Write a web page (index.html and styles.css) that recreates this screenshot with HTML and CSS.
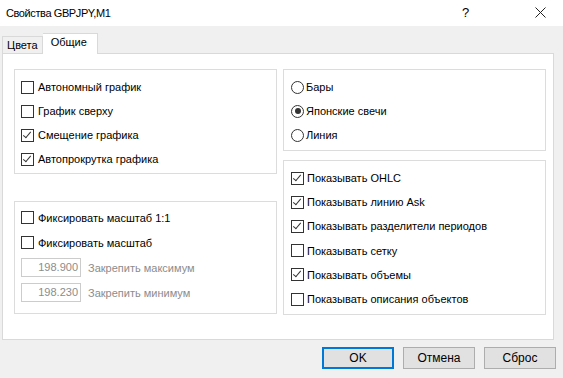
FILE: index.html
```html
<!DOCTYPE html>
<html lang="ru">
<head>
<meta charset="utf-8">
<link rel="stylesheet" href="styles.css">
</head>
<body>
<div class="dialog">
  <div class="titlebar">
    <span class="title">Свойства GBPJPY,M1</span>
    <span class="help">?</span>
    <span class="close"><svg width="11" height="11" viewBox="0 0 11 11"><path d="M0.5 0.5L10.5 10.5M10.5 0.5L0.5 10.5" stroke="#222" stroke-width="1" fill="none"/></svg></span>
  </div>
  <div class="body">
    <div class="tabs">
      <div class="tab">Цвета</div>
      <div class="tab active">Общие</div>
    </div>
    <div class="panel">
      <div class="col">
        <div class="group g1">
          <div class="row"><span class="cb"></span>Автономный график</div>
          <div class="row"><span class="cb"></span>График сверху</div>
          <div class="row"><span class="cb on"></span>Смещение графика</div>
          <div class="row"><span class="cb on"></span>Автопрокрутка графика</div>
        </div>
        <div class="group g3">
          <div class="row"><span class="cb"></span>Фиксировать масштаб 1:1</div>
          <div class="row"><span class="cb"></span>Фиксировать масштаб</div>
          <div class="row dis"><span class="input">198.900</span>Закрепить максимум</div>
          <div class="row dis"><span class="input">198.230</span>Закрепить минимум</div>
        </div>
      </div>
      <div class="col">
        <div class="group g2">
          <div class="row"><span class="rb"></span>Бары</div>
          <div class="row"><span class="rb on"></span>Японские свечи</div>
          <div class="row"><span class="rb"></span>Линия</div>
        </div>
        <div class="group g4">
          <div class="row"><span class="cb on"></span>Показывать OHLC</div>
          <div class="row"><span class="cb on"></span>Показывать линию Ask</div>
          <div class="row"><span class="cb on"></span>Показывать разделители периодов</div>
          <div class="row"><span class="cb"></span>Показывать сетку</div>
          <div class="row"><span class="cb on"></span>Показывать объемы</div>
          <div class="row"><span class="cb"></span>Показывать описания объектов</div>
        </div>
      </div>
    </div>
    <div class="buttons">
      <div class="btn default">OK</div>
      <div class="btn">Отмена</div>
      <div class="btn">Сброс</div>
    </div>
  </div>
</div>
</body>
</html>
```
FILE: styles.css
```css
html, body {
  margin: 0;
  padding: 0;
  background: #f0f0f0;
}
.dialog {
  width: 563px;
  height: 378px;
  font-family: "Liberation Sans", Arial, sans-serif;
  font-size: 11px;
  color: #000;
  background: #f0f0f0;
}
.titlebar {
  height: 26px;
  background: #fff;
  display: flex;
  align-items: center;
  position: relative;
}
.title {
  margin-left: 6px;
  font-size: 11px;
  letter-spacing: -0.4px;
  margin-top: -1px;
}
.help {
  position: absolute;
  left: 462px;
  top: 5px;
  font-size: 13px;
}
.close {
  position: absolute;
  left: 535px;
  top: 7px;
  display: flex;
}
.body {
  padding: 7px 9px 0 2px;
}
.tabs {
  display: flex;
  align-items: flex-end;
  height: 20px;
}
.tab {
  height: 16px;
  line-height: 16px;
  padding: 0 4px 0 4px;
  border: 1px solid #d9d9d9;
  border-bottom: none;
  background: #f0f0f0;
}
.tab.active {
  height: 20px;
  line-height: 16px;
  background: #fff;
  padding: 0 10px 0 8px;
  border-left: none;
  margin-bottom: -1px;
  position: relative;
  z-index: 1;
}
.panel {
  height: 287px;
  background: #fff;
  border: 1px solid #d9d9d9;
  display: flex;
  padding: 15px 0 0 11px;
  box-sizing: border-box;
  gap: 6px;
}
.col {
  width: 263px;
  display: flex;
  flex-direction: column;
}
.group {
  border: 1px solid #dcdcdc;
  box-sizing: border-box;
}
.g1 { height: 105px; padding: 5px 0 0 6px; }
.g3 { height: 113px; padding: 3px 0 0 6px; margin-top: 27px; }
.g2 { height: 82px; padding: 5px 0 0 7px; }
.g4 { height: 155px; padding: 5px 0 0 7px; margin-top: 9px; }
.g3 .row { height: 25px; }
.row {
  height: 24px;
  display: flex;
  align-items: center;
  white-space: nowrap;
}
.g4 .row { height: 24.2px; }
.cb {
  width: 11px;
  height: 11px;
  border: 1px solid #333;
  background: #fff;
  margin-right: 4px;
  flex: none;
  position: relative;
}
.g4 .cb { margin-right: 3px; }
.cb.on::after {
  content: "";
  position: absolute;
  left: 3px;
  top: 0px;
  width: 3px;
  height: 7px;
  border-right: 1px solid #333;
  border-bottom: 1px solid #333;
  transform: rotate(40deg);
}
.rb {
  width: 11px;
  height: 11px;
  border: 1px solid #333;
  border-radius: 50%;
  background: #fff;
  margin-right: 2px;
  flex: none;
  position: relative;
}
.rb.on::after {
  content: "";
  position: absolute;
  left: 2.5px;
  top: 2.5px;
  width: 6px;
  height: 6px;
  border-radius: 50%;
  background: #333;
}
.dis { color: #8c8c8c; }
.input {
  height: 17px;
  border: 1px solid #cccccc;
  text-align: right;
  line-height: 17px;
  padding-right: 2px;
  box-sizing: content-box;
  margin-right: 7px;
  color: #8c8c8c;
  width: 56px;
}
.buttons {
  display: flex;
  justify-content: flex-end;
  gap: 9px;
  padding-top: 7px;
  margin-right: -2px;
}
.btn {
  width: 72px;
  height: 22px;
  box-sizing: border-box;
  border: 1px solid #adadad;
  background: #e1e1e1;
  text-align: center;
  line-height: 20px;
  font-size: 12px;
}
.btn.default {
  border: 2px solid #0078d7;
  line-height: 18px;
}
```
